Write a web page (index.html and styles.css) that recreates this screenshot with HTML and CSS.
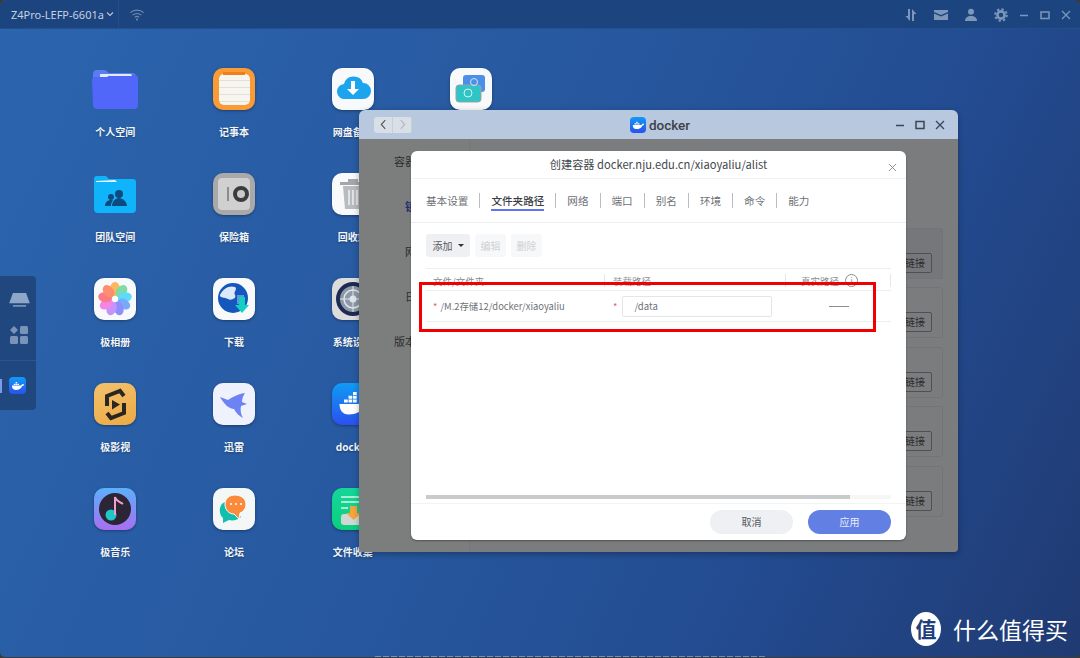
FILE: index.html
```html
<!DOCTYPE html>
<html lang="zh-CN">
<head>
<meta charset="UTF-8" />
<meta name="viewport" content="width=device-width, initial-scale=1" />
<title>docker</title>
<link rel="stylesheet" href="styles.css">
</head>
<body>

<div class="desktop">

  <div class="topbar">
    <div class="device">Z4Pro-LEFP-6601a <svg class="chev" viewBox="0 0 8 6"><path d="M1 1.5l3 3 3-3" fill="none" stroke="#b9c6da" stroke-width="1.1"/></svg></div>
    <svg class="wifi" viewBox="0 0 18 14"><g fill="none" stroke="#6f8bb2" stroke-width="1.2"><path d="M1.5 5a11 11 0 0 1 15 0"/><path d="M4 7.8a7.4 7.4 0 0 1 10 0"/><path d="M6.5 10.3a3.6 3.6 0 0 1 5 0"/></g><circle cx="9" cy="12.6" r="1.2" fill="#6f8bb2"/></svg>
    <div class="top-actions">
      <svg class="ti" viewBox="0 0 14 14"><path d="M6 1v12L1.5 8H4V1zM8 13V1l4.500 5H10v7z" fill="#7d97bb"/></svg>
      <svg class="ti" viewBox="0 0 14 14"><path d="M0 2h14v2L7 7 0 4zM0 5.6l7 3 7-3V12H0z" fill="#7d97bb"/></svg>
      <svg class="ti" viewBox="0 0 14 14"><circle cx="7" cy="3.8" r="3" fill="#7d97bb"/><path d="M1 13c0-3.500 2.500-5 6-5s6 1.500 6 5z" fill="#7d97bb"/></svg>
      <svg class="ti" viewBox="0 0 14 14"><circle cx="7" cy="7" r="3.6" fill="none" stroke="#7d97bb" stroke-width="2.6"/><circle cx="7" cy="7" r="5.9" fill="none" stroke="#7d97bb" stroke-width="1.8" stroke-dasharray="2.3 2.3"/></svg>
      <div class="win-group">
        <svg class="tw" viewBox="0 0 12 12"><path d="M2 6.5h8" stroke="#7d97bb" stroke-width="1.6"/></svg>
        <svg class="tw" viewBox="0 0 12 12"><rect x="2" y="3" width="8" height="6.500" fill="none" stroke="#7d97bb" stroke-width="1.5"/></svg>
        <svg class="tw" viewBox="0 0 12 12"><path d="M2 2l8 8M10 2l-8 8" stroke="#7d97bb" stroke-width="1.3"/></svg>
      </div>
    </div>
  </div>

  <div class="apps">
    <div class="app"><svg class="icon folder" viewBox="0 0 46 40"><path d="M1 5a4 4 0 0 1 4-4h8l4 3h23a4 4 0 0 1 4 4v8H1z" fill="#5a7df2"/><path d="M8 5h30l2 3H8z" fill="#e4e9fb"/><path d="M0 11a3 3 0 0 1 3-3h12l3-2h25a3 3 0 0 1 3 3v27a4 4 0 0 1-4 4H6a4 4 0 0 1-5-4z" fill="#5067fa"/><path d="M16 7l3-2h20l1 2z" fill="#e4e9fb"/></svg><span>个人空间</span></div>
    <div class="app"><div class="icon notes"><i class="notes-tab"></i><div class="notes-page"></div></div><span>记事本</span></div>
    <div class="app"><div class="icon white"><svg viewBox="0 0 42 42"><path d="M13 31a7.500 7.500 0 0 1-1-15 10 10 0 0 1 19-1 8 8 0 0 1 0 16z" fill="#1ca4ec"/><path d="M19 13h4v8h4l-6 6-6-6h4z" fill="#fff"/></svg></div><span>网盘备份</span></div>
    <div class="app"><div class="icon white"><svg viewBox="0 0 42 42"><rect x="13" y="7" width="22" height="17" rx="3" fill="#4b8fe6"/><rect x="6" y="17" width="25" height="17" rx="3" fill="#2fc4c6" stroke="#9aa3a8"/><circle cx="18" cy="25" r="4" fill="none" stroke="#d6f5f5"/><circle cx="24" cy="14" r="3.500" fill="none" stroke="#cfe3fa"/></svg></div></div>

    <div class="app"><svg class="icon" viewBox="0 0 42 42"><path d="M0 6a3 3 0 0 1 3-3h9l3 3h24a3 3 0 0 1 3 3v27a4 4 0 0 1-4 4H4a4 4 0 0 1-4-4z" fill="#10b4fb"/><path d="M2 8l19-1 2 2H2z" fill="#e7f6ff"/><circle cx="25" cy="21" r="4" fill="#0d4a80"/><circle cx="17" cy="24" r="3" fill="#0d4a80"/><path d="M11 33c0-4 3-6 6-6 1 0 2 .300 2 .500-1.500 1.500-2 3.500-2 5.500zM18 33c0-4 3-8 7-8s8 4 8 8z" fill="#0d4a80"/></svg><span>团队空间</span></div>
    <div class="app"><div class="icon safe"><div class="safe-door"><i class="safe-bar"></i><b class="safe-dial"></b></div></div><span>保险箱</span></div>
    <div class="app"><div class="icon white"><svg viewBox="0 0 42 42"><path d="M8 9h26v3H8zM16 9V6h10v3" fill="#a3a6aa"/><path d="M11 13h20l-2 23H13z" fill="#b8bbbf"/><path d="M17 17v15M21 17v15M25 17v15" stroke="#eef0f2" stroke-width="1.5"/></svg></div><span>回收站</span></div>
    <div class="app hidden"></div>

    <div class="app"><div class="icon white"><svg viewBox="0 0 42 42"><ellipse cx="21" cy="11" rx="5" ry="7" fill="#fcb860"/><ellipse cx="21" cy="11" rx="5" ry="7" fill="#7fdca6" transform="rotate(40 21 21)"/><ellipse cx="21" cy="11" rx="5" ry="7" fill="#5cdcf8" transform="rotate(80 21 21)"/><ellipse cx="21" cy="11" rx="5" ry="7" fill="#79a9fb" transform="rotate(120 21 21)"/><ellipse cx="21" cy="11" rx="5" ry="7" fill="#8f8ffb" transform="rotate(160 21 21)"/><ellipse cx="21" cy="11" rx="5" ry="7" fill="#c494fa" transform="rotate(200 21 21)"/><ellipse cx="21" cy="11" rx="5" ry="7" fill="#f286e6" transform="rotate(240 21 21)"/><ellipse cx="21" cy="11" rx="5" ry="7" fill="#fb7a86" transform="rotate(280 21 21)"/><ellipse cx="21" cy="11" rx="5" ry="7" fill="#fb8f6e" transform="rotate(320 21 21)"/><circle cx="21" cy="21" r="3" fill="#fff"/></svg></div><span>极相册</span></div>
    <div class="app"><div class="icon white"><svg viewBox="0 0 42 42"><circle cx="20" cy="20" r="15" fill="#1457bd"/><path d="M7 17c3-7 10-10 15-8 3 2-2 5 0 8s-4 6-7 4-9-1-8-4z" fill="#dbe9f8"/><path d="M24 26h7v-9h-7z" fill="#8fbff0" opacity=".6"/><path d="M26 19h6v8h4l-7 8-7-8h4z" fill="#13d0c2"/></svg></div><span>下载</span></div>
    <div class="app"><div class="icon silver"><svg viewBox="0 0 42 42"><circle cx="21" cy="21" r="17" fill="#1d2a52"/><circle cx="21" cy="21" r="13" fill="#8c99a8"/><circle cx="21" cy="21" r="9" fill="none" stroke="#e1e5e8" stroke-width="1.5"/><circle cx="21" cy="21" r="3.500" fill="#e1e5e8"/><path d="M21 8v26M8 21h26" stroke="#e1e5e8"/></svg></div><span>系统设置</span></div>
    <div class="app hidden"></div>

    <div class="app"><div class="icon movie"><svg viewBox="0 0 42 42"><g fill="none" stroke="#2a2722" stroke-width="4"><path d="M13 23v-10l13-5 4 5"/><path d="M30 20v10l-13 5-4-5"/></g><path d="M18 17l8 4.500-8 5z" fill="#2a2722"/></svg></div><span>极影视</span></div>
    <div class="app"><div class="icon pale"><svg viewBox="0 0 42 42"><path d="M7 14l8 3c3-2 9-6 17-7-2 3-3 6-3 9l5 2-6 2c-1 4 0 9 2 12-4-2-7-5-9-9-5 0-10-5-14-12z" fill="#6d83f5"/></svg></div><span>迅雷</span></div>
    <div class="app"><div class="icon whale"><svg class="whale-glyph" viewBox="0 0 24 24"><path d="M3 12h15c1-2 2-2.500 3-2.500 1 .500 1.500 1 1.500 2-1 1-2 1.200-3 1.200C18 17 14 19 9 19c-4 0-6-3-6-7z" fill="#fff"/><path d="M6 9h2.500v2H6zM9 9h2.500v2H9zM12 9h2.500v2H12zM9 6.500h2.500v2H9zM12 6.500h2.500v2H12zM12 4h2.500v2H12z" fill="#fff"/></svg></div><span>docker</span></div>
    <div class="app hidden"></div>

    <div class="app"><div class="icon music"><svg viewBox="0 0 42 42"><circle cx="21" cy="21" r="16" fill="#2b2536"/><circle cx="17" cy="27" r="5.500" fill="#1fc7c7"/><path d="M21 27V9c1 4 5 5 8 7" fill="none" stroke="#f3a0c8" stroke-width="2"/></svg></div><span>极音乐</span></div>
    <div class="app"><div class="icon pale-green"><svg viewBox="0 0 42 42"><path d="M12 14c-6 2-7 12-2 16v5l6-3c4 1 9 0 12-3z" fill="#12bfae"/><path d="M12 16c0-6 5-9 10-9s11 3 11 9c0 5-3 8-6 9l-1 6-5-5c-5 0-9-4-9-10z" fill="#fb8a3c" stroke="#fff"/><circle cx="18" cy="16" r="1" fill="#fff"/><circle cx="23" cy="16" r="1" fill="#fff"/><circle cx="28" cy="16" r="1" fill="#fff"/></svg></div><span>论坛</span></div>
    <div class="app"><div class="icon collect"><svg viewBox="0 0 42 42"><path d="M9 9h24M9 14h24M9 20h7" stroke="#d9f8e8" stroke-width="1.5"/><rect x="9" y="26" width="25" height="11" rx="3" fill="#cfd8d4"/><path d="M18 18h7v7h4l-7.500 7-7.500-7h4z" fill="#f6a43d"/></svg></div><span>文件收集</span></div>
  </div>

  <div class="sidebar">
    <div class="side-group">
      <svg class="side-disk" viewBox="0 0 22 16"><path d="M4 0h14l4 11H0z" fill="#8ea6c8"/><path d="M4 13h14v1.500H4z" fill="#8ea6c8"/></svg>
      <svg class="side-grid" viewBox="0 0 18 18"><path d="M4 0l4 4-4 4-4-4z" fill="#7a94b9"/><rect x="10" y="0" width="8" height="8" rx="1.5" fill="#7a94b9"/><rect x="0" y="10" width="8" height="8" rx="1.5" fill="#7a94b9"/><rect x="10" y="10" width="8" height="8" rx="1.5" fill="#7a94b9"/></svg>
    </div>
    <div class="side-running">
      <i class="run-mark"></i>
      <div class="side-docker"><svg viewBox="0 0 24 24"><path d="M3 12h15c1-2 2-2.500 3-2.500 1 .500 1.500 1 1.500 2-1 1-2 1.200-3 1.200C18 17 14 19 9 19c-4 0-6-3-6-7z" fill="#fff"/><path d="M6 9h2.500v2H6zM9 9h2.500v2H9zM12 9h2.500v2H12zM9 6.500h2.500v2H9z" fill="#fff"/></svg></div>
    </div>
  </div>

  <div class="window">
    <div class="win-title">
      <div class="nav-btns"><span class="nav-btn"><svg viewBox="0 0 8 12"><path d="M6 1L1.500 6 6 11" fill="none" stroke="#555" stroke-width="1.3"/></svg></span><span class="nav-btn"><svg viewBox="0 0 8 12"><path d="M2 1l4.500 5L2 11" fill="none" stroke="#b5b8bc" stroke-width="1.3"/></svg></span></div>
      <div class="win-name"><span class="side-docker small"><svg viewBox="0 0 24 24"><path d="M3 12h15c1-2 2-2.500 3-2.500 1 .500 1.500 1 1.500 2-1 1-2 1.200-3 1.200C18 17 14 19 9 19c-4 0-6-3-6-7z" fill="#fff"/><path d="M6 9h2.500v2H6zM9 9h2.500v2H9zM12 9h2.500v2H12zM9 6.500h2.500v2H9z" fill="#fff"/></svg></span>docker</div>
      <div class="win-btns">
        <svg viewBox="0 0 12 12"><path d="M2 6.500h8" stroke="#3c4654" stroke-width="1.6"/></svg>
        <svg viewBox="0 0 12 12"><rect x="2" y="2.500" width="8" height="7" fill="none" stroke="#3c4654" stroke-width="1.5"/></svg>
        <svg viewBox="0 0 12 12"><path d="M2 2l8 8M10 2l-8 8" stroke="#3c4654" stroke-width="1.3"/></svg>
      </div>
    </div>
    <div class="win-body">
      <div class="win-side">
        <div class="side-item">容器管理</div>
        <div class="side-item sub active">镜像</div>
        <div class="side-item sub">网络</div>
        <div class="side-item sub">日志</div>
        <div class="side-item">版本信息</div>
      </div>
      <div class="win-list">
        <div class="list-row first"><span class="link-btn">链接</span></div>
        <div class="list-row"><span class="link-btn">链接</span></div>
        <div class="list-row"><span class="link-btn">链接</span></div>
        <div class="list-row"><span class="link-btn">链接</span></div>
        <div class="list-row"><span class="link-btn">链接</span></div>
      </div>
    </div>

    <div class="dialog">
      <div class="dlg-head">创建容器 docker.nju.edu.cn/xiaoyaliu/alist
        <svg class="dlg-close" viewBox="0 0 10 10"><path d="M1 1l8 8M9 1L1 9" stroke="#8b8f94" stroke-width="1.1"/></svg>
      </div>
      <div class="tabs">
        <span class="tab">基本设置</span>
        <span class="tab active">文件夹路径</span>
        <span class="tab">网络</span>
        <span class="tab">端口</span>
        <span class="tab">别名</span>
        <span class="tab">环境</span>
        <span class="tab">命令</span>
        <span class="tab">能力</span>
      </div>
      <div class="dlg-body">
        <div class="toolbar">
          <span class="tool add">添加 <i class="caret"></i></span>
          <span class="tool off">编辑</span>
          <span class="tool off">删除</span>
        </div>
        <div class="table">
          <div class="thead">
            <div class="th c1">文件/文件夹</div>
            <div class="th c2">装载路径</div>
            <div class="th c3">真实路径 <span class="info">i</span></div>
          </div>
          <div class="trow">
            <div class="td c1"><em>*</em>/M.2存储12/docker/xiaoyaliu</div>
            <div class="td c2"><em>*</em><span class="path-input">/data</span></div>
            <div class="td c3"><i class="dash"></i></div>
          </div>
          <div class="highlight"></div>
        </div>
        <div class="scroll"><div class="scroll-thumb"></div></div>
      </div>
      <div class="dlg-foot">
        <span class="btn cancel">取消</span>
        <span class="btn apply">应用</span>
      </div>
    </div>
  </div>

  <div class="footer-line"></div>

  <div class="watermark">
    <div class="wm-badge">值</div>
    <span>什么值得买</span>
  </div>
</div>

</body>
</html>
```

FILE: styles.css
```css
html, body {
  margin: 0;
  padding: 0;
  overflow: hidden;
  font-family: "Noto Sans CJK SC", "Noto Sans", sans-serif;
}
body {
  width: 1080px;
  height: 658px;
  background: #3b3b3b;
}
.desktop {
  position: relative;
  width: 1080px;
  height: 657px;
  overflow: hidden;
  border-radius: 7px 7px 5px 5px;
  background: linear-gradient(115deg, #2b65ae 0%, #27589f 45%, #234c92 72%, #203a72 100%);
}

/* top bar */
.topbar {
  display: flex;
  align-items: center;
  height: 28px;
  background: #1c457f;
  box-shadow: 0 1px 0 #24508f;
}
.device {
  display: flex;
  align-items: center;
  gap: 2px;
  width: 119px;
  height: 28px;
  padding-left: 11px;
  box-sizing: border-box;
  border-right: 1px solid #24508a;
  font-size: 11px;
  color: #c5d0e0;
  white-space: nowrap;
  font-family: "Noto Sans", sans-serif;
}
.chev { width: 8px; height: 6px; flex: none; }
.wifi { width: 16px; height: 13px; margin-left: 10px; }
.top-actions {
  display: flex;
  align-items: center;
  gap: 16px;
  margin-left: auto;
  padding: 2px 8px 0 0;
}
.ti { width: 14px; height: 14px; }
.win-group {
  display: flex;
  gap: 9px;
  margin-left: -6px;
}
.tw { width: 12px; height: 12px; }

/* desktop apps */
.apps {
  display: grid;
  grid-template-columns: repeat(4, 118.7px);
  grid-auto-rows: 105px;
  position: absolute;
  top: 68px;
  left: 56px;
}
.app {
  display: flex;
  flex-direction: column;
  align-items: center;
}
.app span {
  margin-top: 13px;
  font-size: 10px;
  line-height: 18px;
  font-weight: 700;
  color: #f2f5fa;
  white-space: nowrap;
  text-shadow: 0 1px 2px rgba(0, 0, 0, .35);
}
.icon {
  display: block;
  flex: none;
  width: 42px;
  height: 42px;
  border-radius: 10px;
  overflow: hidden;
  box-shadow: 0 1px 3px rgba(0, 0, 0, .35);
}
svg.icon { border-radius: 0; overflow: visible; box-shadow: none; }
svg.folder { width: 46px; height: 40px; margin: 1px 0 1px; }
.icon > svg { display: block; width: 42px; height: 42px; }
.white { background: #f8f9fb; }
.pale { background: #eff1fd; }
.pale-green { background: #f3f8f7; }
.silver { background: #dcdcdc; }
.movie { background: linear-gradient(160deg, #f3c16d, #ecaa44); }
.whale { display: flex; align-items: center; justify-content: center; background: linear-gradient(180deg, #0f9bf4, #2b50ef); }
.icon.whale > .whale-glyph { width: 36px; height: 36px; }
.music { background: linear-gradient(180deg, #5bb0fb, #a86ff0); }
.collect { background: linear-gradient(180deg, #14d69a, #0bcf7e); }
.notes {
  display: flex;
  flex-direction: column;
  align-items: center;
  justify-content: center;
  position: relative;
  background: #fb9b35;
}
.notes-tab {
  position: absolute;
  top: 4px;
  left: 10px;
  width: 22px;
  height: 3px;
  background: #ee7f1c;
}
.notes-page {
  width: 31px;
  height: 31px;
  border-radius: 5px;
  background: repeating-linear-gradient(180deg, #f6f5f0 0, #f6f5f0 6px, #e2e0d9 6px, #e2e0d9 7px);
}
.safe {
  display: flex;
  align-items: center;
  justify-content: center;
  background: #a9a9a9;
}
.safe-door {
  display: flex;
  align-items: center;
  gap: 4px;
  box-sizing: border-box;
  width: 32px;
  height: 32px;
  padding-left: 9px;
  border-radius: 4px;
  background: #d0d0d0;
}
.safe-bar { width: 2px; height: 14px; background: #8c8c8c; }
.safe-dial {
  width: 8px;
  height: 8px;
  border: 4px solid #3c3c3c;
  border-radius: 50%;
  background: #c9c9c9;
}
.hidden { visibility: hidden; }

/* left dock */
.sidebar {
  display: flex;
  flex-direction: column;
  position: absolute;
  top: 276px;
  left: 0;
  width: 36px;
  height: 134px;
  background: #20487f;
  border-radius: 0 4px 4px 0;
}
.side-group {
  display: flex;
  flex-direction: column;
  align-items: center;
  gap: 18px;
  height: 85px;
  padding: 17px 0 0 2px;
  box-sizing: border-box;
  border-bottom: 1px solid #2a5690;
}
.side-disk { width: 21px; height: 15px; }
.side-grid { width: 18px; height: 18px; }
.side-running {
  display: flex;
  align-items: center;
  height: 49px;
}
.run-mark {
  width: 2px;
  height: 14px;
  margin-right: 7px;
  background: #7d9aeb;
}
.side-docker {
  display: flex;
  align-items: center;
  justify-content: center;
  width: 17px;
  height: 17px;
  border-radius: 4px;
  background: linear-gradient(180deg, #0f9bf4, #2b50ef);
}
.side-docker svg { width: 15px; height: 15px; }
.side-docker.small { margin-right: 3px; width: 16px; height: 16px; }
.side-docker.small svg { width: 14px; height: 14px; }

/* docker window */
.window {
  position: absolute;
  top: 110px;
  left: 359px;
  width: 599px;
  height: 442px;
  overflow: hidden;
  border-radius: 6px 6px 4px 4px;
  box-shadow: 0 2px 6px rgba(0, 0, 0, .3);
}
.win-title {
  display: flex;
  align-items: center;
  justify-content: space-between;
  height: 29px;
  padding: 0 12px 0 15px;
  background: #b7c8df;
}
.nav-btns {
  display: flex;
  width: 38px;
  height: 16px;
  border-radius: 3px;
  overflow: hidden;
  background: #d9dfe7;
}
.nav-btn {
  display: flex;
  align-items: center;
  justify-content: center;
  flex: 1;
  border-right: 1px solid #c8ced6;
}
.nav-btn svg { width: 7px; height: 11px; }
.win-name {
  display: flex;
  align-items: center;
  margin-left: 14px;
  font-size: 13.5px;
  font-weight: 500;
  color: #3d4146;
  font-family: Roboto, sans-serif;
}
.win-btns { display: flex; gap: 8px; }
.win-btns svg { width: 12px; height: 12px; }
.win-body {
  display: flex;
  height: 413px;
  background: #7b7c7e;
}
.win-side {
  width: 110px;
  flex: none;
  box-sizing: border-box;
  padding-top: 14px;
  background: #7b7e7c;
  font-size: 11px;
  color: #2c2d2e;
}
.side-item { height: 45px; padding-left: 35px; line-height: 16px; white-space: nowrap; }
.side-item.sub { padding-left: 46px; }
.side-item.active { color: #20306f; font-weight: 700; }
.win-list {
  flex: 1;
  padding: 89px 15px 0 0;
  box-sizing: border-box;
  border-left: 1px solid #76777a;
}
.list-row {
  display: flex;
  align-items: flex-end;
  justify-content: flex-end;
  height: 51px;
  margin-bottom: 8.4px;
  padding: 0 10px 5px 0;
  box-sizing: border-box;
  border: 1px solid #737476;
  border-radius: 3px;
}
.list-row.first { background: #76777a; }
.link-btn {
  width: 36px;
  height: 20px;
  padding-right: 6px;
  box-sizing: border-box;
  border: 1px solid #4f5052;
  border-radius: 2px;
  font-size: 10px;
  line-height: 18px;
  color: #2c2d2e;
  text-align: right;
}

/* dialog over the window */
.dialog {
  display: flex;
  flex-direction: column;
  position: absolute;
  top: 41px;
  left: 52px;
  width: 495px;
  height: 389px;
  border-radius: 6px;
  background: #fff;
  box-shadow: 0 1px 2px rgba(0, 0, 0, .35);
}
.dlg-head {
  position: relative;
  height: 28px;
  padding-top: 6px;
  box-sizing: border-box;
  border-bottom: 1px solid #f1f2f4;
  font-size: 11.2px;
  line-height: 15px;
  color: #43474d;
  text-align: center;
}
.dlg-close {
  position: absolute;
  top: 12px;
  right: 9px;
  width: 9px;
  height: 9px;
}
.tabs {
  display: flex;
  align-items: center;
  flex: none;
  height: 44px;
  padding-left: 15px;
  border-bottom: 1px solid #eceef0;
  box-sizing: border-box;
  font-size: 10.6px;
  color: #6e7176;
}
.tab {
  position: relative;
  line-height: 15px;
  padding-right: 11px;
  margin-right: 11px;
  border-right: 1px solid #b9bcc0;
}
.tab:last-child { border-right: 0; }
.tab.active { color: #3a3e44; font-weight: 500; }
.tab.active::after {
  content: "";
  position: absolute;
  left: 0;
  right: 11px;
  bottom: -3px;
  height: 2px;
  background: #5c76ee;
}
.dlg-body {
  position: relative;
  flex: 1;
  padding: 11px 15px 0;
}
.toolbar { display: flex; gap: 5px; }
.tool {
  display: flex;
  align-items: center;
  justify-content: center;
  width: 31px;
  height: 23px;
  border-radius: 3px;
  font-size: 10px;
  color: #cfd1d4;
  background: #f7f8f9;
}
.tool.add {
  gap: 5px;
  width: 44px;
  color: #55585d;
  background: #eff0f3;
}
.caret {
  border: 3px solid transparent;
  border-top: 3px solid #333;
  border-bottom: 0;
}
.table {
  position: relative;
  margin-top: 11px;
  width: 465px;
  font-size: 9.5px;
}
.thead {
  display: flex;
  height: 23px;
  padding-top: 5px;
  box-sizing: border-box;
  border-top: 1px solid #eceef0;
  border-bottom: 1px solid #eceef0;
  color: #898c90;
}
.th {
  display: flex;
  align-items: center;
  gap: 2px;
  height: 13px;
  border-right: 1px solid #e4e6e8;
  box-sizing: border-box;
}
.c1 { width: 179px; padding-left: 7px; box-sizing: border-box; }
.c2 { width: 181px; padding-left: 8px; box-sizing: border-box; }
.c3 { width: 105px; padding-left: 15px; box-sizing: border-box; }
.info {
  display: inline-flex;
  align-items: center;
  justify-content: center;
  width: 13px;
  height: 13px;
  margin-left: 4px;
  box-sizing: border-box;
  border: 1px solid #8a8d91;
  border-radius: 50%;
  font-size: 8px;
  line-height: 1;
}
.trow {
  display: flex;
  align-items: center;
  height: 31px;
  box-sizing: border-box;
  border-bottom: 1px solid #eceef0;
  color: #6f7277;
}
.td { display: flex; align-items: center; font-size: 9.4px; }
.td em {
  margin-right: 3px;
  font-style: normal;
  color: #f0606c;
}
.path-input {
  width: 150px;
  height: 21px;
  margin-left: 2px;
  padding-left: 11px;
  box-sizing: border-box;
  border: 1px solid #e3e5e8;
  border-radius: 2px;
  line-height: 19px;
  font-size: 9.6px;
}
.dash {
  width: 20px;
  height: 1px;
  margin-left: 28px;
  background: #8b8e92;
}
.highlight {
  position: absolute;
  top: 14px;
  left: -7px;
  width: 457px;
  height: 50px;
  border: 3px solid #f00000;
  box-sizing: border-box;
}
.scroll {
  position: absolute;
  left: 15px;
  right: 15px;
  bottom: 4px;
  height: 4px;
  background: #f6f6f7;
}
.scroll-thumb { width: 424px; height: 4px; background: #c9cacc; }
.dlg-foot {
  display: flex;
  justify-content: flex-end;
  align-items: center;
  flex: none;
  gap: 15px;
  height: 37px;
  padding-right: 15px;
  box-sizing: border-box;
  border-top: 1px solid #f2f3f4;
}
.btn {
  width: 83px;
  height: 24px;
  border-radius: 12px;
  font-size: 10px;
  line-height: 24px;
  text-align: center;
}
.btn.cancel { background: #eff0f3; color: #55585d; }
.btn.apply { background: #627fe3; color: #e9edfb; }

.footer-line {
  position: absolute;
  bottom: 0;
  left: 375px;
  width: 390px;
  height: 1px;
  background: repeating-linear-gradient(90deg, rgba(190, 205, 230, .5) 0, rgba(190, 205, 230, .5) 6px, transparent 6px, transparent 8px);
}

/* watermark */
.watermark {
  display: flex;
  align-items: center;
  gap: 12px;
  position: absolute;
  right: 12px;
  bottom: 11px;
  color: #fff;
  font-size: 23px;
  line-height: 32px;
}
.wm-badge {
  width: 30px;
  height: 34px;
  border-radius: 50%;
  background: #fff;
  color: #1f3f7c;
  font-size: 21px;
  line-height: 33px;
  text-align: center;
  font-weight: 700;
}
```
